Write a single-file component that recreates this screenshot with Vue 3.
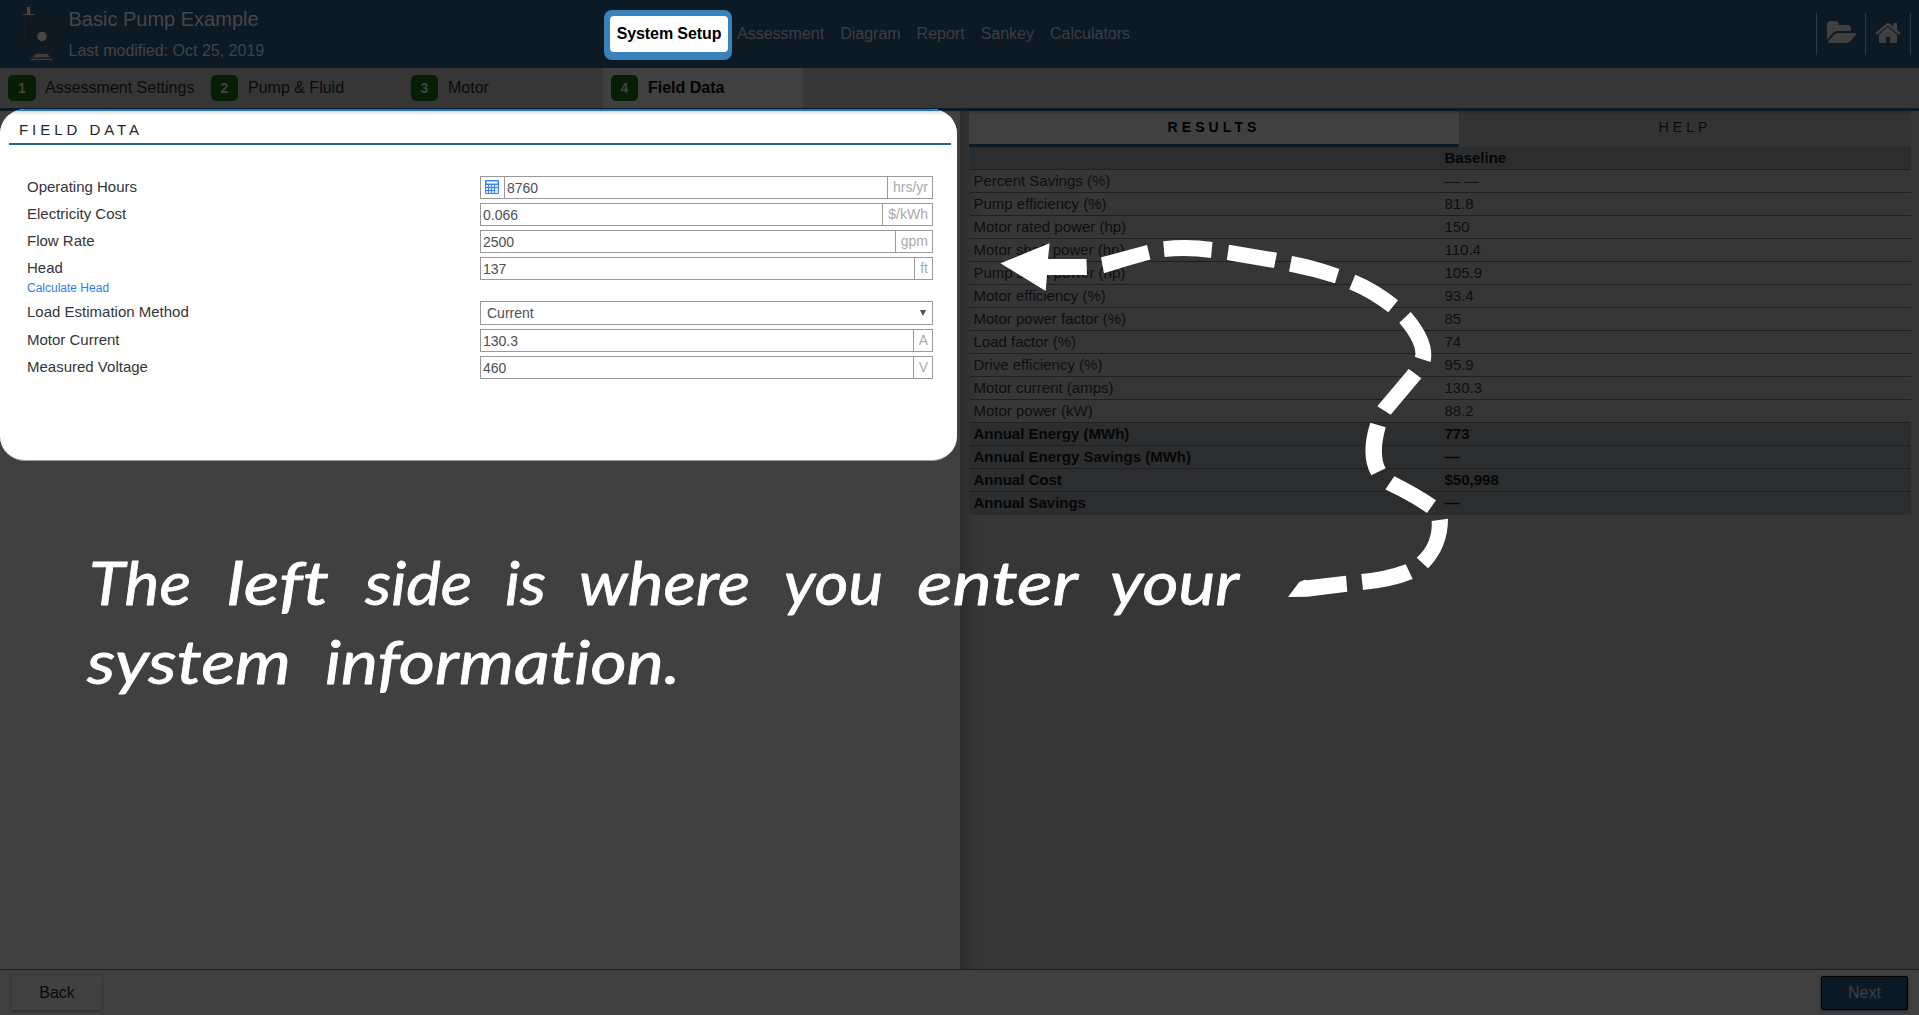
<script setup>
const nav = ['Assessment', 'Diagram', 'Report', 'Sankey', 'Calculators']
const steps = ['Assessment Settings', 'Pump & Fluid', 'Motor', 'Field Data']
const fields = [
  { label: 'Operating Hours', value: '8760', unit: 'hrs/yr', calc: true },
  { label: 'Electricity Cost', value: '0.066', unit: '$/kWh' },
  { label: 'Flow Rate', value: '2500', unit: 'gpm' },
  { label: 'Head', value: '137', unit: 'ft', link: 'Calculate Head' },
  { label: 'Load Estimation Method', value: 'Current', select: true },
  { label: 'Motor Current', value: '130.3', unit: 'A' },
  { label: 'Measured Voltage', value: '460', unit: 'V' }
]
const results = [
  ['Percent Savings (%)', '— —'],
  ['Pump efficiency (%)', '81.8'],
  ['Motor rated power (hp)', '150'],
  ['Motor shaft power (hp)', '110.4'],
  ['Pump shaft power (hp)', '105.9'],
  ['Motor efficiency (%)', '93.4'],
  ['Motor power factor (%)', '85'],
  ['Load factor (%)', '74'],
  ['Drive efficiency (%)', '95.9'],
  ['Motor current (amps)', '130.3'],
  ['Motor power (kW)', '88.2'],
  ['Annual Energy (MWh)', '773', true],
  ['Annual Energy Savings (MWh)', '—', true],
  ['Annual Cost', '$50,998', true],
  ['Annual Savings', '—', true]
]
const words = [
  { t: 'The', x: 89, y: 605, w: 102 },
  { t: 'left', x: 227, y: 605, w: 102 },
  { t: 'side', x: 365, y: 605, w: 107 },
  { t: 'is', x: 505, y: 605, w: 41 },
  { t: 'where', x: 579, y: 605, w: 171 },
  { t: 'you', x: 784, y: 605, w: 99 },
  { t: 'enter', x: 917, y: 605, w: 161 },
  { t: 'your', x: 1110, y: 605, w: 129 },
  { t: 'system', x: 87, y: 684, w: 204 },
  { t: 'information.', x: 325, y: 684, w: 355 }
]
const rays = Array.from({ length: 16 }, (_, i) => i * 22.5)
</script>

<template>
  <div class="app">
    <header class="top">
      <svg class="pump" width="42" height="60" viewBox="0 0 42 60">
        <g stroke="#191a1b" stroke-width="2" stroke-linejoin="round">
          <path d="M5 13v20a17 16.500 0 1 0 6-13v-8" fill="none" />
          <path d="M6 2h5v7h4v3h-13v-3h4z" fill="#454545" />
          <path d="M15 49h13q1 3 5 4v4h-23v-4q4-1 5-4z" fill="#3d3e3e" />
          <path d="M11 54h21" stroke-width="1.500" />
          <path v-for="r in rays" :key="r" d="M22 20v4" stroke-width="1.200" :transform="`rotate(${r} 22 32.5)`" />
          <circle cx="22" cy="32.500" r="5.500" fill="#484848" stroke-width="1.500" />
        </g>
      </svg>
      <div class="titles">
        <div class="title">Basic Pump Example</div>
        <div class="sub">Last modified: Oct 25, 2019</div>
      </div>
      <nav class="nav">
        <div class="current"><span>System Setup</span></div>
        <a v-for="n in nav" :key="n">{{ n }}</a>
      </nav>
      <div class="tools">
        <div class="tool folder">
          <svg width="31" height="28" viewBox="0 0 1984 1792"><path d="M1943 952q0 31-31 66l-336 396q-43 51-120.500 86.500t-143.500 35.500h-1088q-34 0-60.500-13t-26.500-43q0-31 31-66l336-396q43-51 120.500-86.500t143.500-35.500h1088q34 0 60.500 13t26.500 43zm-343-344v160h-832q-94 0-197 47.500t-164 119.500l-337 396-5 6q0-4-.5-12.500t-.5-12.500v-960q0-92 66-158t158-66h320q92 0 158 66t66 158v32h544q92 0 158 66t66 158z" /></svg>
        </div>
        <div class="tool home">
          <svg width="28" height="28" viewBox="0 0 1792 1792"><path d="M1408 992v480q0 26-19 45t-45 19h-384v-384h-256v384h-384q-26 0-45-19t-19-45v-480q0-1 .5-3t.5-3l575-474 575 474q1 2 1 6zm223-69l-62 74q-8 9-21 11h-3q-13 0-21-7l-692-577-692 577q-12 8-24 7-13-2-21-11l-62-74q-8-10-7-23.500t11-21.500l719-599q32-26 76-26t76 26l244 204v-195q0-14 9-23t23-9h192q14 0 23 9t9 23v408l219 182q10 8 11 21.500t-7 23.500z" /></svg>
        </div>
      </div>
    </header>

    <div class="steps">
      <div v-for="(s, i) in steps" :key="s" class="step" :class="{ active: i === 3 }">
        <b class="num">{{ i + 1 }}</b><span>{{ s }}</span>
      </div>
    </div>

    <main class="main">
      <section class="left">
        <div class="panel">
          <h1 class="heading">FIELD DATA</h1>
          <div class="form">
            <div v-for="f in fields" :key="f.label" class="row" :class="{ linked: f.link, sel: f.select }">
              <div class="label">{{ f.label }}<a v-if="f.link" class="link">{{ f.link }}</a></div>
              <div class="field">
                <span v-if="f.calc" class="calc">
                  <svg width="14" height="14" viewBox="0 0 14 14">
                    <rect width="14" height="14" rx="1" fill="#3b82f6" />
                    <path d="M1.500 1.500h11v2h-11z" fill="#fff" />
                    <path d="M1 5h2v2H1zM4 5h2v2H4zM7 5h2v2H7zM10 5h3v2h-3zM1 8h2v2H1zM4 8h2v2H4zM7 8h2v2H7zM10 8h3v5h-3zM1 11h2v2H1zM4 11h2v2H4zM7 11h2v2H7z" fill="#dbe9ff" />
                  </svg>
                </span>
                <span class="value">{{ f.value }}</span>
                <svg v-if="f.select" class="caret" width="6" height="6" viewBox="0 0 6 6"><path d="M0 0h6L3 6z" fill="#495057" /></svg>
                <span v-else class="unit">{{ f.unit }}</span>
              </div>
            </div>
          </div>
        </div>
      </section>

      <section class="right">
        <div class="tabs">
          <div class="tab on">RESULTS</div>
          <div class="tab help">HELP</div>
        </div>
        <div class="table">
          <div class="tr strong"><span class="name"></span><span>Baseline</span></div>
          <div v-for="r in results" :key="r[0]" class="tr" :class="{ strong: r[2] }">
            <span class="name">{{ r[0] }}</span><span>{{ r[1] }}</span>
          </div>
        </div>
      </section>
    </main>

    <footer class="foot">
      <div class="btn back">Back</div>
      <div class="btn next">Next</div>
    </footer>

    <svg class="guide" width="1919" height="1015" viewBox="0 0 1919 1015" fill="#fff">
      <text v-for="w in words" :key="w.t" :x="w.x" :y="w.y" :textLength="w.w" lengthAdjust="spacingAndGlyphs">{{ w.t }}</text>
      <path d="M1000.400 263.300 1049.600 243.300 1048 259H1086.400L1087 275H1047L1045.700 291z" />
      <path d="M1101 257.300Q1125 251 1147 245L1150.400 259.500Q1126 266 1104 273.300z" />
      <path d="M1163.200 241.300Q1188 238.500 1212.500 242L1211 258Q1188 254.700 1164.600 257z" />
      <path d="M1229 244.700 1277 252.800 1274 268 1226.800 260z" />
      <path d="M1292 256Q1316 260.500 1339.300 269L1335 283.300Q1312 276 1289 271.500z" />
      <path d="M1355.300 274.700Q1378 284 1398 300.300L1388.300 312.300Q1370 298 1349.300 289.300z" />
      <path d="M1410.700 312Q1435 340 1430.700 362L1415 357Q1418 345 1399.300 322.700z" />
      <path d="M1408.700 369 1421.300 378.300 1390.700 414.700 1377.300 406.300z" />
      <path d="M1370.300 422.700 1385.700 427.300Q1378 455 1385.700 468.300L1371.300 475.300Q1360 455 1370.300 422.700z" />
      <path d="M1394.300 476.300Q1418 488 1436 500.300L1427 513Q1410 501 1385.300 489.500z" />
      <path d="M1431.700 521 1448 518.700Q1448 548 1428 568.300L1416.700 557.700Q1433 543 1431.700 521z" />
      <path d="M1405.700 564.300 1412.700 579Q1393 587 1363 590L1361.300 574Q1385 572 1405.700 564.300z" />
      <path d="M1346 575.700 1347.300 591.700 1307.300 596.700 1288 597 1299.300 582 1305 579.700 1307 580.300z" />
    </svg>
  </div>
</template>

<style>
body { margin: 0; background: #404040; overflow: hidden; }
</style>

<style scoped>
.app { position: relative; width: 1919px; height: 1015px; display: flex; flex-direction: column; overflow: hidden; background: #404040; font-family: "Liberation Sans", Arial, sans-serif; }
.app * { box-sizing: border-box; }
.top { height: 68px; flex: none; display: flex; background: #0c1a26; color: #404040; }
.pump { margin: 4px 0 0 20px; flex: none; }
.titles { width: 548px; flex: none; padding: 7px 0 0 6.500px; white-space: nowrap; }
.title { font-size: 20px; line-height: 24px; color: #474747; }
.sub { font-size: 16px; line-height: 20px; margin-top: 10px; color: #434343; }
.nav { display: flex; height: 68px; flex: 1; font-size: 16px; line-height: 20px; }
.nav a { margin: 24px 16px 0 0; color: #3d3e40; }
.current { flex: none; margin: 10px 5px 0 -6px; width: 128px; height: 50px; padding: 6px 4px 8px 6px; border-radius: 8px; background: #3a82bb; }
.current span { display: block; height: 36px; border-radius: 4px; background: #fff; color: #000; font-weight: bold; text-align: center; line-height: 35px; letter-spacing: -.1px; white-space: nowrap; }
.tools { display: flex; height: 42px; margin: 13px 8px 0 0; border-right: 1px solid #363a3d; }
.tool { border-left: 1px solid #363a3d; padding-top: 6px; }
.tool svg { display: block; fill: #404040; }
.folder { width: 49px; padding-left: 9px; }
.home { width: 45px; padding-left: 9px; }
.steps { height: 43px; flex: none; display: flex; background: #363636; border-bottom: 3px solid #0c1a26; color: #0b0b0b; font-size: 16px; }
.step { width: 200px; padding: 7px 0 0 8px; display: flex; gap: 10px; line-height: 25px; white-space: nowrap; }
.step:first-child { width: 203px; gap: 9px; }
.step.active { background: #404040; font-weight: bold; color: #030303; }
.num { width: 27px; height: 26px; border-radius: 5px; background: #061e04; color: #444; font-size: 14px; line-height: 26px; text-align: center; }
.step:first-child .num { width: 28px; }
.main { flex: 1; display: flex; min-height: 0; }
.left { width: 960px; flex: none; }
.panel { position: relative; margin-top: -2px; width: 957px; height: 352px; border-radius: 25px; background: linear-gradient(#2577b5 0 2px, #d5d5d5 2px, #fff 6px) #fff; border-bottom: 1px solid #999; padding: 9px 6px 0 9px; overflow: hidden; }
.heading { margin: 0; height: 27px; padding-left: 10px; border-bottom: 2px solid #256795; font-size: 15px; line-height: 23px; font-weight: normal; letter-spacing: 3.950px; color: #212529; }
.form { padding: 31px 18px 0 18px; }
.row { display: flex; height: 23px; margin-bottom: 4px; font-size: 15px; color: #333539; }
.row.linked { height: 40px; }
.row.sel { height: 24px; }
.label { width: 453px; line-height: 21px; flex: none; }
.link { display: block; font-size: 12px; line-height: 20px; color: #307bf6; }
.field { flex: 1; display: flex; height: 23px; border: 1px solid #999; font-size: 14px; line-height: 23px; color: #495057; }
.sel .field { height: 24px; padding-left: 4px; line-height: 23px; }
.calc { width: 24px; border-right: 1px solid #999; padding: 3px 0 0 4px; }
.calc svg { display: block; }
.value { flex: 1; padding-left: 2px; }
.unit { border-left: 1px solid #999; padding: 0 4px 0 5px; color: #aaa; line-height: 20px; }
.caret { margin: 8px 6px 0 0; }
.right { flex: 1; padding: 0 8px 0 9px; background: linear-gradient(90deg, #2e2e2e, #363636 20px); }
.tabs { display: flex; height: 36px; font-size: 14px; line-height: 32px; text-align: center; letter-spacing: 4.100px; color: #0a0a0a; }
.tab { flex: 1; background: linear-gradient(#2b2b2b, #333 4px); }
.tab.on { flex: none; width: 490px; background: linear-gradient(#323232, #404040 4px); border-bottom: 3px solid #0c1a26; font-weight: bold; color: #000; }
.table { font-size: 15px; color: #0e0e0e; line-height: 22px; }
.tr { display: flex; height: 23px; border-bottom: 1px solid #1f2021; padding-left: 4.500px; }
.tr:last-child { border-bottom: 0; }
.name { width: 471px; flex: none; }
.strong { background: #2c2d2f; font-weight: bold; color: #060606; }
.foot { height: 46px; flex: none; border-top: 1px solid #1f1f1f; display: flex; justify-content: space-between; padding: 6px 11px 0 12px; }
.btn { height: 34px; text-align: center; font-size: 16px; line-height: 33px; border-radius: 2px; }
.back { width: 90px; background: #414141; color: #090909; box-shadow: 0 1px 3px #2a2a2a; }
.next { width: 87px; line-height: 31px; background: #0c1a26; color: #3c4043; border: 1px solid #000; box-shadow: 0 1px 3px #252525; }
.guide { position: absolute; left: 0; top: 0; pointer-events: none; }
.guide text { font: italic 400 61px Lato, sans-serif; font-variant-ligatures: none; stroke: #fff; stroke-width: .8px; stroke-linejoin: round; }
</style>
